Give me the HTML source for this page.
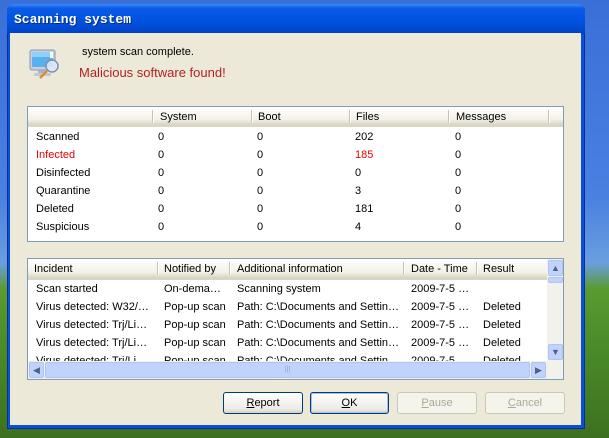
<!DOCTYPE html>
<html><head><style>
*{margin:0;padding:0;box-sizing:border-box}
body{width:609px;height:438px;overflow:hidden;position:relative;font-family:"Liberation Sans",Tahoma,sans-serif;font-size:11px;color:#000;
background:linear-gradient(180deg,#3a6fd8 0%,#4a80e0 45%,#6a9ee0 60%,#5a9a30 66%,#4a8a28 80%,#3d7020 100%);}
.abs{position:absolute}
.win{left:7px;top:4px;width:578px;height:425px;background:#0a4fd6;border-radius:7px 7px 0 0;border:1px solid #0030a0}
.title{left:7px;top:4px;width:578px;height:30px;border-radius:7px 7px 0 0;background:linear-gradient(180deg,#3a8cf8 0%,#0a5ae8 15%,#0055e0 50%,#0048d0 85%,#0040c0 100%)}
.ttext{left:14px;top:12px;color:#fff;font-weight:bold;font-size:13px;font-family:"Liberation Mono",monospace;text-shadow:1px 1px #0a2a80}
.client{left:10px;top:33px;width:571px;height:392px;background:#ece9d8}
.tbl{background:#fff;border:1px solid #7f9db9}
.hdr{position:absolute;left:0;top:0;right:0;background:linear-gradient(#fff,#f3f1e8 70%,#d8d3c0);border-bottom:2px solid #dad6c5}
.sep{position:absolute;top:3px;width:2px;height:13px;border-left:1px solid #c8c4b0;border-right:1px solid #fff}
.t{position:absolute;white-space:nowrap}
.btn{position:absolute;top:392px;height:22px;border:1px solid #003c74;border-radius:3px;background:linear-gradient(#fff,#ecebe6 80%,#d6d0c5);text-align:center;line-height:20px}
.dis{border-color:#c9c7ba;color:#aca899;background:#f5f4ea}
.sb{position:absolute;background:#c1d3fb;border:1px solid #b0c4f0;border-radius:2px}
</style></head><body>
<div class="abs win"></div>
<div class="abs title"></div>
<div class="abs ttext">Scanning system</div>
<div class="abs client"></div>
<svg class="abs" style="left:29px;top:49px" width="32" height="32" viewBox="0 0 32 32">
<rect x="1" y="1" width="25" height="20" rx="2" fill="#c8d0e0" stroke="#8a98b8"/>
<rect x="3" y="3" width="21" height="15" fill="#58b0ee"/>
<rect x="3" y="3" width="21" height="5" fill="#90d0f8"/>
<rect x="9" y="21" width="9" height="3" fill="#a8b2c4"/><rect x="5" y="24" width="17" height="3" rx="1" fill="#c0c8d8"/>
<circle cx="23" cy="17" r="6" fill="#e4ecf8" fill-opacity=".85" stroke="#8090b0" stroke-width="1.5"/>
<line x1="18" y1="22" x2="11" y2="29" stroke="#e08a2c" stroke-width="2.5"/>
<rect x="21" y="3" width="3" height="6" fill="#fff"/>
</svg>
<div class="t" style="left:82px;top:46px">system scan complete.</div>
<div class="t" style="left:79px;top:65px;color:#b22222;font-size:13px">Malicious software found!</div>

<div class="abs tbl" style="left:27px;top:106px;width:537px;height:136px">
 <div class="hdr" style="height:20px">
  <div class="sep" style="left:124px"></div><div class="sep" style="left:223px"></div><div class="sep" style="left:321px"></div><div class="sep" style="left:420px"></div><div class="sep" style="left:520px"></div>
  <div class="t" style="left:132px;top:4px">System</div><div class="t" style="left:230px;top:4px">Boot</div><div class="t" style="left:328px;top:4px">Files</div><div class="t" style="left:428px;top:4px">Messages</div>
 </div>
</div>
<div class="t" style="left:36px;top:128px;line-height:18px">Scanned<br><span style="color:#e00">Infected</span><br>Disinfected<br>Quarantine<br>Deleted<br>Suspicious</div>
<div class="t" style="left:158px;top:128px;line-height:18px">0<br>0<br>0<br>0<br>0<br>0</div>
<div class="t" style="left:257px;top:128px;line-height:18px">0<br>0<br>0<br>0<br>0<br>0</div>
<div class="t" style="left:355px;top:128px;line-height:18px">202<br><span style="color:#e00">185</span><br>0<br>3<br>181<br>4</div>
<div class="t" style="left:455px;top:128px;line-height:18px">0<br>0<br>0<br>0<br>0<br>0</div>

<div class="abs tbl" style="left:27px;top:258px;width:537px;height:122px;overflow:hidden">
 <div class="hdr" style="height:21px;right:16px">
  <div class="sep" style="left:129px"></div><div class="sep" style="left:201px"></div><div class="sep" style="left:375px"></div><div class="sep" style="left:448px"></div>
  <div class="t" style="left:6px;top:4px">Incident</div><div class="t" style="left:136px;top:4px">Notified by</div><div class="t" style="left:209px;top:4px">Additional information</div><div class="t" style="left:383px;top:4px">Date - Time</div><div class="t" style="left:455px;top:4px">Result</div>
 </div>
 <div style="position:absolute;left:0;top:22px;width:519px;height:80px;overflow:hidden">
  <div class="t" style="left:8px;top:-1px;line-height:18px">Scan started<br>Virus detected: W32/…<br>Virus detected: Trj/Li…<br>Virus detected: Trj/Li…<br>Virus detected: Trj/Li…</div>
  <div class="t" style="left:136px;top:-1px;line-height:18px">On-dema…<br>Pop-up scan<br>Pop-up scan<br>Pop-up scan<br>Pop-up scan</div>
  <div class="t" style="left:209px;top:-1px;line-height:18px">Scanning system<br>Path: C:\Documents and Settin…<br>Path: C:\Documents and Settin…<br>Path: C:\Documents and Settin…<br>Path: C:\Documents and Settin…</div>
  <div class="t" style="left:383px;top:-1px;line-height:18px">2009-7-5 …<br>2009-7-5 …<br>2009-7-5 …<br>2009-7-5 …<br>2009-7-5 …</div>
  <div class="t" style="left:455px;top:-1px;line-height:18px">&nbsp;<br>Deleted<br>Deleted<br>Deleted<br>Deleted</div>
 </div>
 <div style="position:absolute;left:519px;top:0;width:17px;height:102px;background:#f3f1ec"></div>
 <div class="sb" style="left:520px;top:1px;width:15px;height:16px;font-size:9px;text-align:center;color:#4d6185;line-height:14px">▲</div>
 <div class="sb" style="left:520px;top:18px;width:15px;height:6px"></div>
 <div class="sb" style="left:520px;top:85px;width:15px;height:16px;font-size:9px;text-align:center;color:#4d6185;line-height:14px">▼</div>
 <div style="position:absolute;left:0;top:102px;width:536px;height:18px;background:#f3f1ec"></div>
 <div class="sb" style="left:1px;top:103px;width:15px;height:16px;font-size:9px;text-align:center;color:#4d6185;line-height:14px">◀</div>
 <div class="sb" style="left:17px;top:103px;width:485px;height:16px;font-size:7px;text-align:center;color:#8aa0d0;line-height:14px">|||</div>
 <div class="sb" style="left:503px;top:103px;width:15px;height:16px;font-size:9px;text-align:center;color:#4d6185;line-height:14px">▶</div>
</div>

<div class="btn" style="left:223px;width:80px"><u>R</u>eport</div>
<div class="btn" style="left:310px;width:79px;box-shadow:inset 0 0 0 1px #a8c0f0"><u>O</u>K</div>
<div class="btn dis" style="left:397px;width:80px"><u>P</u>ause</div>
<div class="btn dis" style="left:485px;width:80px"><u>C</u>ancel</div>
</body></html>
